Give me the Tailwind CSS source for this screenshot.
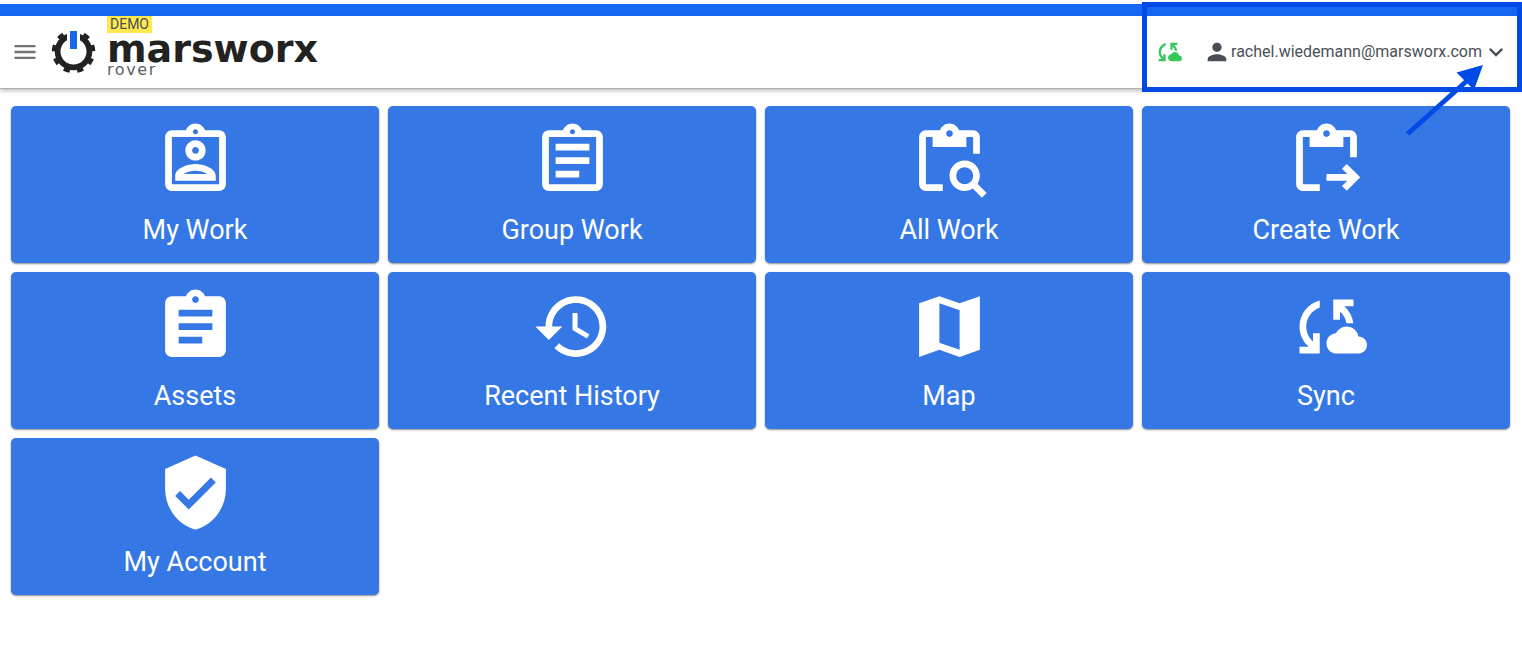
<!DOCTYPE html>
<html lang="en">
<head>
    <meta charset="UTF-8">
    <meta name="viewport" content="width=device-width, initial-scale=1.0">
    <title>marsworx rover</title>
    <script src="https://cdn.jsdelivr.net/npm/@tailwindcss/browser@4"></script>
</head>
<body class="relative min-h-screen overflow-x-hidden bg-white font-['Roboto',sans-serif] text-[#4a4f57]">

    <div class="pt-1">
        <div class="h-3 bg-[#1668f2]"></div>
    </div>

    <header class="flex h-[73px] items-center justify-between border-b border-[#b0b0b0] pr-3 pl-[11px] shadow-[0_2px_4px_rgba(0,0,0,0.25)]">
        <div class="flex h-full items-center">
            <button type="button" aria-label="Menu" class="text-[#757575]">
                <svg class="size-7" viewBox="0 0 24 24" fill="currentColor"><path d="M3 18h18v-2H3v2zm0-5h18v-2H3v2zm0-7v2h18V6H3z"/></svg>
            </button>

            <a href="#" class="ml-3 flex h-full items-center gap-2.5" aria-label="marsworx rover">
                <svg class="size-[46px]" viewBox="0 0 46 46" fill="none">
                    <circle cx="22.500" cy="22.500" r="15.900" stroke="#222221" stroke-width="5.800"/>
                    <circle cx="22.500" cy="22.500" r="20" stroke="#222221" stroke-width="3.400" pathLength="90" stroke-dasharray="4.6 5.4" transform="rotate(-99.2 22.5 22.5)"/>
                    <path d="M16 0h13v14H16z" fill="#fff"/>
                    <path d="M19 2h7v18h-7z" fill="#1668f2"/>
                </svg>
                <span class="flex h-full flex-col items-start">
                    <span class="bg-[#ffe84d] px-[3px] text-sm leading-[17px]">DEMO</span>
                    <span class="font-['DejaVu_Sans',sans-serif] text-[38px] leading-8 font-bold text-[#222221]">marsworx</span>
                    <span class="font-['DejaVu_Sans',sans-serif] text-base leading-[10px] tracking-widest text-[#5a5f69]">rover</span>
                </span>
            </a>
        </div>

        <div class="flex items-center gap-[21px]">
            <button type="button" aria-label="Sync status" class="text-[#34c759]">
                <svg class="size-7" viewBox="0 0 24 24" fill="currentColor"><path d="M21.5 14.98c-.02 0-.03 0-.05.01C21.2 13.3 19.76 12 18 12c-1.4 0-2.6.83-3.16 2.02C13.26 14.1 12 15.4 12 17c0 1.66 1.34 3 3 3l6.5-.02c1.38 0 2.5-1.12 2.5-2.5s-1.12-2.5-2.5-2.5zM10 4.26v2.09C7.67 7.18 6 9.39 6 12c0 1.77.78 3.34 2 4.44V14h2v6H4v-2h2.73C5.06 16.54 4 14.4 4 12c0-3.73 2.55-6.85 6-7.74zM20 6h-2.73c1.43 1.26 2.41 3.01 2.66 5h-2.02C17.68 9.64 16.98 8.45 16 7.56V10h-2V4h6v2z"/></svg>
            </button>
            <button type="button" class="flex items-center text-base text-[#4a4f57]">
                <svg class="size-7" viewBox="0 0 24 24" fill="currentColor"><path d="M12 12c2.21 0 4-1.79 4-4s-1.79-4-4-4-4 1.79-4 4 1.79 4 4 4zm0 2c-2.67 0-8 1.34-8 4v2h16v-2c0-2.66-5.33-4-8-4z"/></svg>
                <span>rachel.wiedemann@marsworx.com</span>
                <svg class="size-7" viewBox="0 0 24 24" fill="currentColor"><path d="M16.59 8.59 12 13.17 7.41 8.59 6 10l6 6 6-6z"/></svg>
            </button>
        </div>
    </header>

    <main class="grid grid-cols-4 gap-[9px] pt-[17px] pr-3 pb-16 pl-[11px] text-[27px] leading-9 text-white">
        <a href="#" class="flex flex-col items-center rounded-[5px] bg-[#3578e5] pt-3.5 pb-[15px] shadow-[0_1px_2px_rgba(0,0,0,0.45)]">
            <svg class="size-[81px]" viewBox="0 0 24 24" fill="currentColor" fill-rule="evenodd"><path d="M19 3h-4.18C14.4 1.84 13.3 1 12 1s-2.4.84-2.82 2H5c-1.1 0-2 .9-2 2v14c0 1.1.9 2 2 2h14c1.1 0 2-.9 2-2V5c0-1.1-.9-2-2-2zm-7-.25c.41 0 .75.34.75.75s-.34.75-.75.75-.75-.34-.75-.75.34-.75.75-.75zM19 19H5V5h14v14z"/><path d="M12 12c1.65 0 3-1.35 3-3s-1.35-3-3-3-3 1.35-3 3 1.35 3 3 3zm0-4c.55 0 1 .45 1 1s-.45 1-1 1-1-.45-1-1 .45-1 1-1zM18 16.58c0-2.5-3.97-3.58-6-3.58s-6 1.08-6 3.58V18h12v-1.42zM8.48 16c.74-.51 2.23-1 3.52-1s2.78.49 3.52 1H8.48z"/></svg>
            <span class="mt-[11px]">My Work</span>
        </a>
        <a href="#" class="flex flex-col items-center rounded-[5px] bg-[#3578e5] pt-3.5 pb-[15px] shadow-[0_1px_2px_rgba(0,0,0,0.45)]">
            <svg class="size-[81px]" viewBox="0 0 24 24" fill="currentColor" fill-rule="evenodd"><path d="M7 15h7v2H7zm0-4h10v2H7zm0-4h10v2H7z"/><path d="M19 3h-4.18C14.4 1.84 13.3 1 12 1s-2.4.84-2.82 2H5c-1.1 0-2 .9-2 2v14c0 1.1.9 2 2 2h14c1.1 0 2-.9 2-2V5c0-1.1-.9-2-2-2zm-7-.25c.41 0 .75.34.75.75s-.34.75-.75.75-.75-.34-.75-.75.34-.75.75-.75zM19 19H5V5h14v14z"/></svg>
            <span class="mt-[11px]">Group Work</span>
        </a>
        <a href="#" class="flex flex-col items-center rounded-[5px] bg-[#3578e5] pt-3.5 pb-[15px] shadow-[0_1px_2px_rgba(0,0,0,0.45)]">
            <svg class="size-[81px]" viewBox="0 0 24 24" fill="currentColor"><path d="M5 5h2v3h10V5h2v5h2V5c0-1.1-.9-2-2-2h-4.18C14.4 1.84 13.3 1 12 1s-2.4.84-2.82 2H5c-1.1 0-2 .9-2 2v14c0 1.1.9 2 2 2h5v-2H5V5zm7-2c.55 0 1 .45 1 1s-.45 1-1 1-1-.45-1-1 .45-1 1-1z"/><path d="M20.3 18.9c.4-.7.7-1.5.7-2.4 0-2.5-2-4.5-4.5-4.5S12 14 12 16.5s2 4.5 4.5 4.5c.9 0 1.7-.3 2.4-.7l2.7 2.7 1.4-1.4-2.7-2.7zm-3.8.1c-1.4 0-2.5-1.1-2.5-2.5s1.1-2.5 2.5-2.5 2.5 1.1 2.5 2.5-1.1 2.5-2.5 2.5z"/></svg>
            <span class="mt-[11px]">All Work</span>
        </a>
        <a href="#" class="flex flex-col items-center rounded-[5px] bg-[#3578e5] pt-3.5 pb-[15px] shadow-[0_1px_2px_rgba(0,0,0,0.45)]">
            <svg class="size-[81px]" viewBox="0 0 24 24" fill="currentColor"><path d="M5 5h2v3h10V5h2v6h2V5c0-1.1-.9-2-2-2h-4.18C14.4 1.84 13.3 1 12 1s-2.4.84-2.82 2H5c-1.1 0-2 .9-2 2v14c0 1.1.9 2 2 2h5v-2H5V5zm7-2c.55 0 1 .45 1 1s-.45 1-1 1-1-.45-1-1 .45-1 1-1z"/><path d="m18.01 13-1.42 1.41 1.58 1.58H12v2h6.17l-1.58 1.59 1.42 1.41 3.99-4z"/></svg>
            <span class="mt-[11px]">Create Work</span>
        </a>
        <a href="#" class="flex flex-col items-center rounded-[5px] bg-[#3578e5] pt-3.5 pb-[15px] shadow-[0_1px_2px_rgba(0,0,0,0.45)]">
            <svg class="size-[81px]" viewBox="0 0 24 24" fill="currentColor"><path d="M19 3h-4.18C14.4 1.84 13.3 1 12 1s-2.4.84-2.82 2H5c-1.1 0-2 .9-2 2v14c0 1.1.9 2 2 2h14c1.1 0 2-.9 2-2V5c0-1.1-.9-2-2-2zm-7 0c.55 0 1 .45 1 1s-.45 1-1 1-1-.45-1-1 .45-1 1-1zm2 14H7v-2h7v2zm3-4H7v-2h10v2zm0-4H7V7h10v2z"/></svg>
            <span class="mt-[11px]">Assets</span>
        </a>
        <a href="#" class="flex flex-col items-center rounded-[5px] bg-[#3578e5] pt-3.5 pb-[15px] shadow-[0_1px_2px_rgba(0,0,0,0.45)]">
            <svg class="size-[81px]" viewBox="0 0 24 24" fill="currentColor"><path d="M13 3c-4.97 0-9 4.03-9 9H1l3.89 3.89.07.14L9 12H6c0-3.87 3.13-7 7-7s7 3.13 7 7-3.13 7-7 7c-1.93 0-3.68-.79-4.94-2.06l-1.42 1.42C8.27 19.99 10.51 21 13 21c4.97 0 9-4.03 9-9s-4.03-9-9-9zm-1 5v5l4.28 2.54.72-1.21-3.5-2.08V8H12z"/></svg>
            <span class="mt-[11px]">Recent History</span>
        </a>
        <a href="#" class="flex flex-col items-center rounded-[5px] bg-[#3578e5] pt-3.5 pb-[15px] shadow-[0_1px_2px_rgba(0,0,0,0.45)]">
            <svg class="size-[81px]" viewBox="0 0 24 24" fill="currentColor" fill-rule="evenodd"><path d="M15 5.1 9 3 3 5.1V21l6-2.1 6 2.1 6-2.1V3l-6 2.1zm0 13.79-6-2.11V5.11l6 2.11v11.67z"/></svg>
            <span class="mt-[11px]">Map</span>
        </a>
        <a href="#" class="flex flex-col items-center rounded-[5px] bg-[#3578e5] pt-3.5 pb-[15px] shadow-[0_1px_2px_rgba(0,0,0,0.45)]">
            <svg class="size-[81px]" viewBox="0 0 24 24" fill="currentColor"><path d="M21.5 14.98c-.02 0-.03 0-.05.01C21.2 13.3 19.76 12 18 12c-1.4 0-2.6.83-3.16 2.02C13.26 14.1 12 15.4 12 17c0 1.66 1.34 3 3 3l6.5-.02c1.38 0 2.5-1.12 2.5-2.5s-1.12-2.5-2.5-2.5zM10 4.26v2.09C7.67 7.18 6 9.39 6 12c0 1.77.78 3.34 2 4.44V14h2v6H4v-2h2.73C5.06 16.54 4 14.4 4 12c0-3.73 2.55-6.85 6-7.74zM20 6h-2.73c1.43 1.26 2.41 3.01 2.66 5h-2.02C17.68 9.64 16.98 8.45 16 7.56V10h-2V4h6v2z"/></svg>
            <span class="mt-[11px]">Sync</span>
        </a>
        <a href="#" class="flex flex-col items-center rounded-[5px] bg-[#3578e5] pt-3.5 pb-[15px] shadow-[0_1px_2px_rgba(0,0,0,0.45)]">
            <svg class="size-[81px]" viewBox="0 0 24 24" fill="currentColor"><path d="M12 1L3 5v6c0 5.55 3.84 10.74 9 12 5.16-1.26 9-6.45 9-12V5l-9-4zm-2 16l-4-4 1.41-1.41L10 14.17l6.59-6.59L18 9l-8 8z"/></svg>
            <span class="mt-[11px]">My Account</span>
        </a>
    </main>

    <!-- Callout around the account menu -->
    <div class="pointer-events-none absolute top-0.5 right-0 h-[90px] w-[380px] border-[5px] border-[#004be6]"></div>
    <svg class="pointer-events-none absolute top-[60px] right-[32px] h-20 w-[90px]" viewBox="0 0 90 80" fill="none">
        <path d="M7.5 74 69 19" stroke="#004be6" stroke-width="5"/>
        <path d="M83 5 56.500 12.500 74 30z" fill="#004be6"/>
    </svg>

</body>
</html>
